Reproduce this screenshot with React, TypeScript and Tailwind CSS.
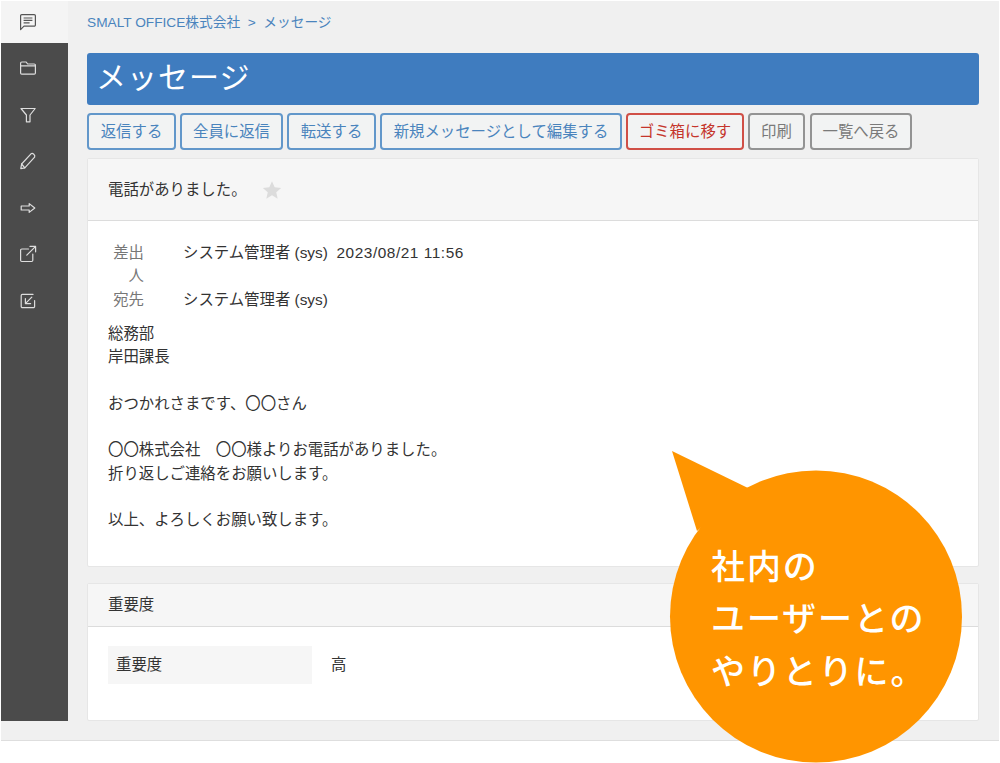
import React from "react";

const font = { fontFamily: '"Liberation Sans", "Noto Sans CJK JP", sans-serif' };

function Ic({ children }: { children: React.ReactNode }) {
  return (
    <svg width="18" height="18" viewBox="0 0 18 18" fill="none" stroke="currentColor" strokeWidth="1.2" strokeLinejoin="round" strokeLinecap="round">
      {children}
    </svg>
  );
}

const icons = [
  <Ic key="f"><path d="M1.6 5V14a1.2 1.2 0 0 0 1.2 1.2H15.2a1.2 1.2 0 0 0 1.2-1.2V6.2A1.2 1.2 0 0 0 15.2 5H8.6L7.2 3H2.8A1.2 1.2 0 0 0 1.6 4.2Z" /><path d="M1.6 6.8H16.4" /></Ic>,
  <Ic key="t"><path d="M2 2.5H16.2L11 9V15.8H7.4V9Z" /></Ic>,
  <Ic key="p"><path d="M1.8 16.6 2.6 12 12 1.8C13.6 0.6 16.6 3 15.6 5.2L5.8 15.8Z" /><path d="M2.6 12 5.8 15.8" /></Ic>,
  <Ic key="a"><path d="M2.2 7H10.2V4.6L15.8 9 10.2 13.4V11H2.2Z" /></Ic>,
  <Ic key="o"><path d="M9.5 4H2.8A1.2 1.2 0 0 0 1.6 5.2V15.3A1.2 1.2 0 0 0 2.8 16.5H12.6A1.2 1.2 0 0 0 13.8 15.3V9" /><path d="M7.8 10.2 16.4 1.6M11 1.4H16.6V6.8" /></Ic>,
  <Ic key="i"><path d="M14 2.4H3.4A1.2 1.2 0 0 0 2.2 3.6V14.4A1.2 1.2 0 0 0 3.4 15.6H14.4A1.2 1.2 0 0 0 15.6 14.4V8.5" /><path d="M12.8 5.2 6.6 11.4M6.4 6.6V11.6H11.6" /></Ic>,
];

function Btn({ label, cls }: { label: string; cls: string }) {
  return (
    <div className={`h-[37px] flex items-center justify-center border-2 rounded-[4px] text-[15.4px] leading-none bg-[#f2f3f3] ${cls}`}>
      {label}
    </div>
  );
}

const blue = "border-[#6297ca] text-[#4a84bd]";
const gray = "border-[#939393] text-[#7a7a7a]";

export default function App() {
  return (
    <div style={font} className="w-[1000px] h-[763px] bg-white overflow-hidden relative pt-px px-px">
      <div className="h-[740px] w-[998px] flex bg-[#f0f0f0] border-b border-[#dedede] text-[#333]">
        <aside className="w-[67px] h-[720px] flex flex-col shrink-0 text-[#dedede] bg-[#4b4b4b]">
          <div className="h-[42px] bg-[#f4f4f4] text-[#555] flex items-start pl-[18px] pt-[12px]">
            <svg width="18" height="18" viewBox="0 0 18 18" fill="none" stroke="currentColor" strokeWidth="1.2" strokeLinejoin="round">
              <path d="M1.6 16.6V2.8A1.2 1.2 0 0 1 2.8 1.6H15.2A1.2 1.2 0 0 1 16.4 2.8V12A1.2 1.2 0 0 1 15.2 13.2H5Z" />
              <path d="M4.6 5H13.4M4.6 7.4H13.4M4.6 9.8H10.6" />
            </svg>
          </div>
          <div className="flex flex-col items-start pl-[18px] pt-[16px] gap-[28.5px]">{icons}</div>
        </aside>
        <main className="w-[892px] ml-[19px] flex flex-col">
          <div className="h-[52px] pt-[14px] text-[13.7px] leading-[16px] text-[#4a84bd] whitespace-pre">SMALT OFFICE株式会社  &gt;  メッセージ</div>
          <div className="h-[52px] rounded-[3px] bg-[#3f7cbf] text-white text-[30px] leading-[50px] pl-[9px] tracking-[1px]">メッセージ</div>
          <div className="flex gap-[4px] mt-[8px]">
            <Btn label="返信する" cls={`w-[89px] ${blue}`} />
            <Btn label="全員に返信" cls={`w-[103px] ${blue}`} />
            <Btn label="転送する" cls={`w-[89px] ${blue}`} />
            <Btn label="新規メッセージとして編集する" cls={`w-[242px] ${blue}`} />
            <Btn label="ゴミ箱に移す" cls="w-[118px] border-[#d04f46] text-[#c5352b]" />
            <Btn label="印刷" cls={`w-[57px] ${gray}`} />
            <Btn label="一覧へ戻る" cls={`w-[102px] ml-px ${gray}`} />
          </div>
          <section className="mt-[8px] h-[409px] bg-white border border-[#e6e6e6] rounded-[2px]">
            <div className="h-[62px] bg-[#f6f6f6] border-b border-[#dcdcdc] flex items-center pl-[20px] text-[15.4px]">
              <span>電話がありました。</span>
              <svg className="ml-[15px]" width="20" height="20" viewBox="0 0 24 24" fill="#dcdcdc">
                <path d="M12 1.5l3.2 7.2 7.8.8-5.9 5.2 1.7 7.7L12 18.4l-6.8 4 1.7-7.7L1 9.5l7.8-.8z" />
              </svg>
            </div>
            <div className="pl-[20px] pt-[20px] text-[15.4px] leading-[23.3px]">
              <div className="flex">
                <div className="w-[36px] text-right text-[#777]">差出<br />人</div>
                <div className="ml-[39px] whitespace-pre">システム管理者 (sys)  <span className="tracking-[0.55px]">2023/08/21 11:56</span></div>
              </div>
              <div className="flex">
                <div className="w-[36px] text-right text-[#777]">宛先</div>
                <div className="ml-[39px]">システム管理者 (sys)</div>
              </div>
              <div className="mt-[11px] whitespace-pre">{"総務部\n岸田課長\n\nおつかれさまです、〇〇さん\n\n〇〇株式会社　〇〇様よりお電話がありました。\n折り返しご連絡をお願いします。\n\n以上、よろしくお願い致します。"}</div>
            </div>
          </section>
          <section className="mt-[16px] h-[138px] bg-white border border-[#e6e6e6] rounded-[2px]">
            <div className="h-[43px] bg-[#f6f6f6] border-b border-[#dcdcdc] flex items-center pl-[20px] text-[15.4px]">重要度</div>
            <div className="flex items-center mt-[19px] ml-[20px] text-[15.4px]">
              <div className="w-[204px] h-[38px] bg-[#f6f6f6] flex items-center pl-[8px]">重要度</div>
              <div className="ml-[19px]">高</div>
            </div>
          </section>
        </main>
      </div>

      <svg className="absolute left-0 top-0 pointer-events-none" width="1000" height="763" viewBox="0 0 1000 763">
        <circle cx="816" cy="616.5" r="146" fill="#ff9500" />
        <path d="M672 451 748 488 697 531Z" fill="#ff9500" />
      </svg>
      <div className="absolute left-[711px] top-[540.5px] text-white text-[34px] leading-[52.7px] font-medium tracking-[1.9px] whitespace-pre">{"社内の\nユーザーとの\nやりとりに。"}</div>
    </div>
  );
}
